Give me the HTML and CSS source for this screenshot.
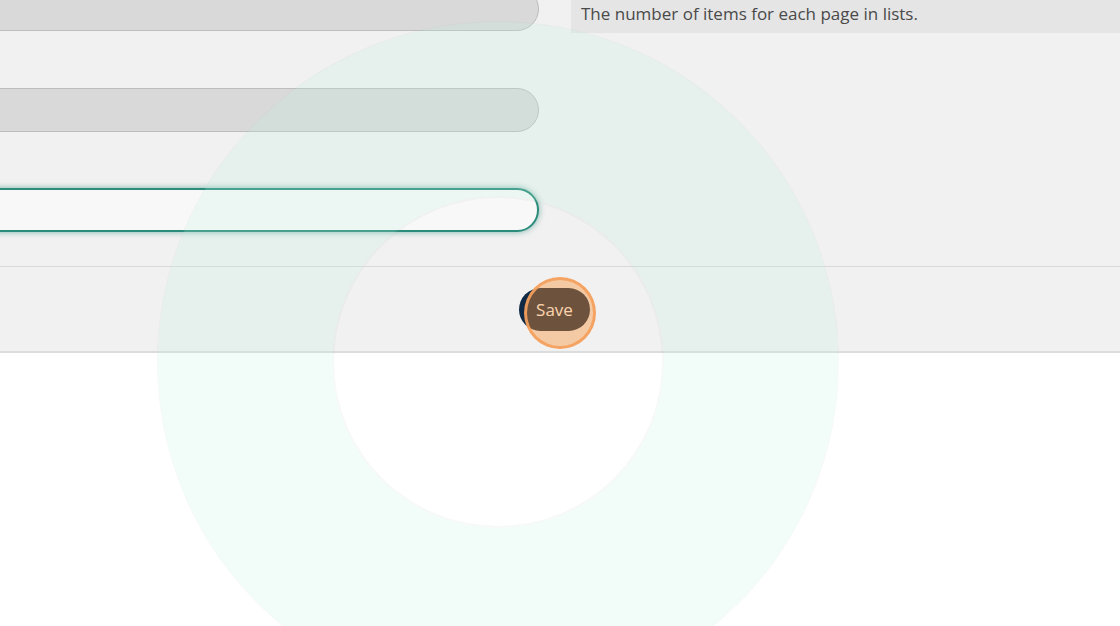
FILE: index.html
```html
<!DOCTYPE html>
<html lang="en">
<head>
    <meta charset="UTF-8">
    <meta name="viewport" content="width=device-width, initial-scale=1.0">
    <title>Settings</title>
    <link rel="stylesheet" href="styles.css">
</head>
<body>
    <form class="settings" onsubmit="return false">
        <div class="fields">
            <div class="field-col">
                <input class="text-input" type="text" disabled>
                <input class="text-input" type="text" disabled>
                <input class="text-input is-focused" type="number" value="">
            </div>
            <div class="help-col">
                <p class="help">The number of items for each page in lists.</p>
            </div>
        </div>

        <div class="actions">
            <button class="save-btn" type="submit">Save<span class="ripple"></span></button>
        </div>
    </form>

    <!-- marca d'agua -->
    <div class="watermark-frame">
        <div class="watermark"></div>
    </div>
</body>
</html>
```

FILE: styles.css
```css
/* Base */
html, body {
    height: 100%;
    overflow: hidden;
}

body {
    margin: 0;
    font-family: 'Open Sans', 'Liberation Sans', sans-serif;
    background: #fff;
    color: #444;
}

/* Form area */
.settings {
    background: #f1f1f1;
    border-bottom: 2px solid #dcdcdc;
}

.fields {
    display: grid;
    grid-template-columns: 579px 1fr;
    column-gap: 32px;
    margin-left: -40px;
}

.field-col {
    display: flex;
    flex-direction: column;
    gap: 56px;
    padding-bottom: 34px;
}

.text-input {
    box-sizing: border-box;
    height: 44px;
    width: 100%;
    border: 1px solid #bdbdbd;
    border-radius: 22px;
    background: #d9d9d9;
    font: inherit;
    padding: 0 18px;
    outline: none;
}

.text-input:first-child {
    margin-top: -13px;
    margin-bottom: 1px;
}

.text-input.is-focused {
    border: 2px solid #2b8c7b;
    background: #f8f8f8;
    box-shadow: 0 0 6px rgba(43, 140, 123, 0.6);
}

/* Help text */
.help {
    margin: 0;
    background: #e5e5e5;
    padding: 2px 10px 7px;
    font-size: 17px;
    line-height: 24px;
    color: #4a4a4a;
}

/* Buttons */
.actions {
    display: flex;
    justify-content: center;
    padding: 21px 11px 20px 0;
    border-top: 1px solid #d9d9d9;
}

.save-btn {
    position: relative;
    width: 71px;
    height: 43px;
    border: none;
    border-radius: 22px;
    background: #102a45;
    color: #fff;
    font-family: inherit;
    font-size: 17px;
    padding: 0;
    cursor: pointer;
}

.ripple {
    position: absolute;
    left: 5px;
    top: -11px;
    width: 72px;
    height: 72px;
    box-sizing: border-box;
    border-radius: 50%;
    border: 3px solid rgba(244, 160, 92, 0.92);
    background: rgba(251, 146, 50, 0.4);
    pointer-events: none;
}

/* Watermark ring */
.watermark-frame {
    position: fixed;
    inset: 0;
    overflow: hidden;
    pointer-events: none;
}

.watermark {
    position: absolute;
    left: 158px;
    top: 22px;
    width: 680px;
    height: 680px;
    box-sizing: border-box;
    border-radius: 50%;
    border: 174px solid rgba(190, 238, 220, 0.2);
    box-shadow: 0 0 0 1px rgba(170, 200, 190, 0.1), inset 0 0 0 2px rgba(170, 200, 190, 0.1);
}
```
